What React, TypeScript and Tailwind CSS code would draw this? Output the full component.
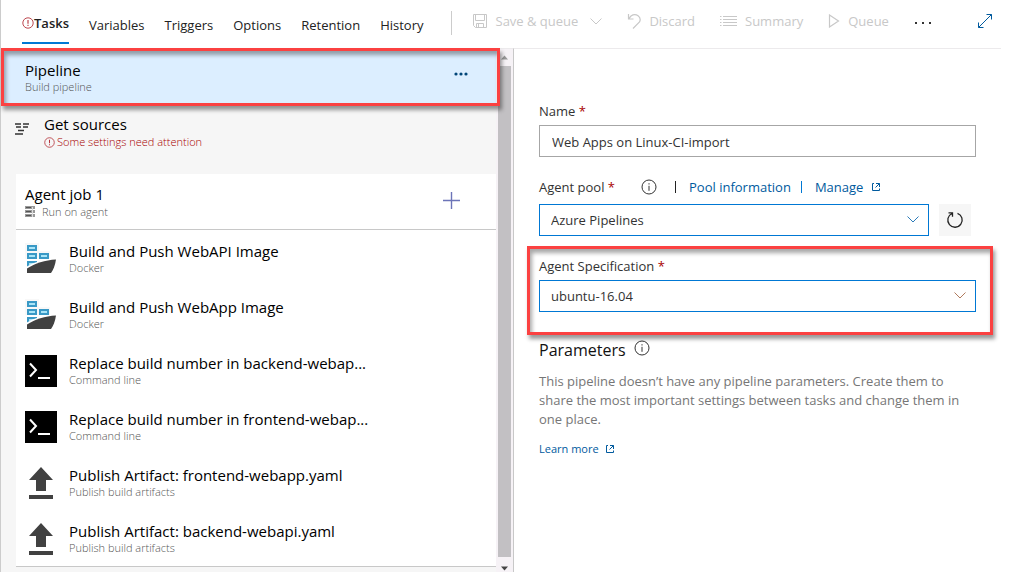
import React from "react";

type Task = { title: string; kind: string; icon: "docker" | "shell" | "upload" };

const tasks: Task[] = [
  { title: "Build and Push WebAPI Image", kind: "Docker", icon: "docker" },
  { title: "Build and Push WebApp Image", kind: "Docker", icon: "docker" },
  { title: "Replace build number in backend-webap...", kind: "Command line", icon: "shell" },
  { title: "Replace build number in frontend-webap...", kind: "Command line", icon: "shell" },
  { title: "Publish Artifact: frontend-webapp.yaml", kind: "Publish build artifacts", icon: "upload" },
  { title: "Publish Artifact: backend-webapi.yaml", kind: "Publish build artifacts", icon: "upload" },
];

function AlertIcon({ className }: { className: string }) {
  return (
    <svg viewBox="0 0 12 12" className={className} fill="none" stroke="#b5343c" aria-hidden="true">
      <circle cx="6" cy="6" r="5.2" strokeWidth="0.9" />
      <path d="M6 3v3.8M6 7.8v1.2" strokeWidth="1.1" />
    </svg>
  );
}

function InfoIcon() {
  return (
    <svg viewBox="0 0 16 16" className="size-4 shrink-0" fill="none" stroke="#333" aria-hidden="true">
      <circle cx="8" cy="8" r="7" strokeWidth="1" />
      <path d="M8 6.8v5M8 4.2v1.3" strokeWidth="1" />
    </svg>
  );
}

function ExternalIcon() {
  return (
    <svg viewBox="0 0 10 10" className="size-[10px]" fill="none" stroke="currentColor" aria-hidden="true">
      <path d="M3 1.5H1.5v7h7V6.5M5 1.5h3.5V5M8.5 1.5l-4 4" />
    </svg>
  );
}

function Chevron({ className }: { className: string }) {
  return (
    <svg viewBox="0 0 12 7" className={className} fill="none" stroke="currentColor" aria-hidden="true">
      <path d="M0.5 0.5 6 6l5.500-5.500" />
    </svg>
  );
}

function TaskIcon({ icon }: { icon: Task["icon"] }) {
  if (icon === "docker") {
    return (
      <svg viewBox="0 0 32 32" className="size-8 shrink-0" aria-hidden="true">
        <path d="M0 0h14v8h11v8H0z" fill="#f8f8f8" />
        <path d="M2 2h10v6H2zM2 10h10v6H2zM14 10h10v6H14zM2 18h10v6H2z" fill="#3999c6" />
        <path d="M4 4h6v2H4zM4 12h6v2H4zM16 12h6v2h-6zM4 20h6v2H4z" fill="#a9e4f7" />
        <path d="M2 23.500C10 19 20 15.500 32 15v16H2z" fill="#fff" />
        <path d="M2 25.500C10 20.500 20 17 31 16.500c-1 6-2.500 10-5 13.500H2z" fill="#414141" />
      </svg>
    );
  }
  if (icon === "shell") {
    return (
      <svg viewBox="0 0 32 32" className="size-8 shrink-0" aria-hidden="true">
        <path d="M0 0h32v32H0z" fill="#000" />
        <path d="m5 8.500 6 6.500-6 6.500M13 23h12" fill="none" stroke="#fff" strokeWidth="2" />
      </svg>
    );
  }
  return (
    <svg viewBox="0 0 32 32" className="size-8 shrink-0" fill="#414141" aria-hidden="true">
      <path d="M16 0 28 13h-7v11H11V13H4zM4 28h24v4H4z" />
    </svg>
  );
}

function Highlight({ className }: { className: string }) {
  return (
    <div
      className={`pointer-events-none absolute z-10 border-3 border-[#fb4141] shadow-[2px_4px_4px_rgba(0,0,0,0.4),inset_2px_4px_4px_rgba(0,0,0,0.35)] ${className}`}
    />
  );
}

function ToolButton({ label, children, after }: { label: string; children: React.ReactNode; after?: React.ReactNode }) {
  return (
    <button type="button" disabled className="flex items-center gap-2 whitespace-nowrap text-[#c8c8c8]">
      {children}
      <span>{label}</span>
      {after}
    </button>
  );
}

function Field({ label, id }: { label: string; id: string }) {
  return (
    <label htmlFor={id} className="block text-[13px] leading-5">
      {label} <span className="text-[#a80000]">*</span>
    </label>
  );
}

function Header() {
  return (
    <header className="flex h-12 items-start pl-[21px] text-[13px] leading-5 text-[#222]">
      <nav className="flex gap-5" aria-label="Pipeline editor">
        <a href="#tasks" className="flex h-[44px] items-center border-b-2 border-[#0078d4] pt-[3px] font-semibold">
          <AlertIcon className="size-[12px]" />
          Tasks
        </a>
        {["Variables", "Triggers", "Options", "Retention", "History"].map((t) => (
          <a key={t} href={`#${t}`} className="pt-[15px]">
            {t}
          </a>
        ))}
      </nav>
      <div className="mt-[11px] ml-[27px] h-6 w-px bg-[#ccc]" />
      <div className="ml-5 flex flex-1 items-center gap-[25px] pt-[11px]">
        <ToolButton label="Save & queue" after={<Chevron className="ml-1 h-[7px] w-3" />}>
          <svg viewBox="0 0 16 16" className="size-4" fill="none" stroke="#c8c8c8" aria-hidden="true">
            <path d="M1.500 1.500h13v13h-11l-2-2zM3.500 1.500v6h9v-6M4.500 14.500v-4h7v4M6.500 11v3" />
          </svg>
        </ToolButton>
        <ToolButton label="Discard">
          <svg viewBox="0 0 14 16" className="h-4 w-[14px]" fill="none" stroke="#c8c8c8" aria-hidden="true">
            <path d="M1.500 1v5h5M1.500 6l2.500-3c5-3.500 11 1 8.500 6L6 15.500" strokeWidth="1.2" />
          </svg>
        </ToolButton>
        <ToolButton label="Summary">
          <svg viewBox="0 0 17 12" className="h-3 w-[17px]" stroke="#c8c8c8" aria-hidden="true">
            <path d="M0 1.500h1.500M3 1.500h14M0 4.500h1.500M3 4.500h14M0 7.500h1.500M3 7.500h14M0 10.500h1.500M3 10.500h14" />
          </svg>
        </ToolButton>
        <ToolButton label="Queue">
          <svg viewBox="0 0 12 14" className="h-[14px] w-3" fill="none" stroke="#c8c8c8" aria-hidden="true">
            <path d="M1.500 1v12L10.500 7z" strokeWidth="1.2" />
          </svg>
        </ToolButton>
        <button type="button" aria-label="More actions" className="pt-1">
          <svg viewBox="0 0 18 4" className="h-1 w-[18px]" fill="#333" aria-hidden="true">
            <path d="M1 1h2v2H1zM8 1h2v2H8zM15 1h2v2h-2z" />
          </svg>
        </button>
      </div>
      <button type="button" aria-label="Full screen" className="mt-[13px] mr-[27px]">
        <svg viewBox="0 0 16 16" className="size-4" fill="none" stroke="#005a9e" aria-hidden="true">
          <path d="M9.500 1.500h5v5M14.500 1.500l-13 13M1.500 9.500v5h5" />
        </svg>
      </button>
    </header>
  );
}

function Sidebar() {
  return (
    <aside className="relative flex w-[513px] shrink-0 border-t border-r border-t-[#eceaec] border-r-[#c8c8c8] bg-[#f6f6f6]">
      <div className="min-w-0 flex-1">
        <div className="flex h-[57px] items-start justify-between bg-[#dceeff] pt-[11px] pr-7 pl-6">
          <div>
            <div className="text-[15px] leading-5 text-black">Pipeline</div>
            <div className="text-[11px] leading-[14px] font-light text-[#555]">Build pipeline</div>
          </div>
          <button type="button" aria-label="Pipeline actions" className="mt-3">
            <svg viewBox="0 0 14 4" className="h-1 w-[14px]" fill="#004578" aria-hidden="true">
              <circle cx="2" cy="2" r="1.600" />
              <circle cx="7" cy="2" r="1.600" />
              <circle cx="12" cy="2" r="1.600" />
            </svg>
          </button>
        </div>
        <div className="flex h-[68px] items-start gap-[14px] pt-2 pl-[14px]">
          <svg viewBox="0 0 15 14" className="mt-2 h-[14px] w-[15px]" stroke="#333" strokeWidth="1.300" aria-hidden="true">
            <path d="M0 2h6M8 2h6M1 5h5M8 5h5M3 8.500h6M0 12h8" />
          </svg>
          <div>
            <div className="text-[15px] leading-5 text-black">Get sources</div>
            <div className="flex items-center gap-[2px] text-[11px] leading-4 font-light text-[#a80000]">
              <AlertIcon className="size-[11px]" />
              Some settings need attention
            </div>
          </div>
        </div>
        <div className="ml-[15px] border-b border-[#c8c8c8] bg-white">
          <div className="flex h-14 items-start justify-between border-b border-[#c8c8c8] pt-[10px] pr-9 pl-[9px]">
            <div>
              <div className="text-[15px] leading-5 text-black">Agent job 1</div>
              <div className="flex items-center gap-[7px] text-[11px] leading-4 font-light text-[#555]">
                <svg viewBox="0 0 10 12" className="h-3 w-[10px]" aria-hidden="true">
                  <path d="M0 0h10v3H0zM0 4h10v3H0zM0 8h10v3H0z" fill="#999" />
                  <path d="M1 1.500h5M1 5.500h5M1 9.500h5" stroke="#555" />
                  <path d="M7.500 1v10" stroke="#ddd" />
                </svg>
                Run on agent
              </div>
            </div>
            <button type="button" aria-label="Add a task" className="mt-2">
              <svg viewBox="0 0 17 17" className="size-[17px]" fill="none" stroke="#6c74b8" strokeWidth="1.400" aria-hidden="true">
                <path d="M8.500 0v17M0 8.500h17" />
              </svg>
            </button>
          </div>
          <ul>
            {tasks.map((t) => (
              <li key={t.title} className="flex h-14 items-start gap-3 pt-[13px] pl-[9px]">
                <TaskIcon icon={t.icon} />
                <div className="-mt-[2px] min-w-0">
                  <div className="truncate text-[15px] leading-5 text-black">{t.title}</div>
                  <div className="text-[11px] leading-[14px] font-light text-[#555]">{t.kind}</div>
                </div>
              </li>
            ))}
          </ul>
        </div>
      </div>
      <div className="flex w-[17px] flex-col items-center bg-[#f6f2f6]" aria-hidden="true">
        <svg viewBox="0 0 17 17" className="size-[17px]" fill="#999">
          <path d="M5 10.500h7L8.500 6.500z" />
        </svg>
        <div className="w-[13px] flex-1 bg-[#c2c0c3]" />
        <svg viewBox="0 0 17 15" className="h-[15px] w-[17px]" fill="#444">
          <path d="M5 9.500h7l-3.500 4z" />
        </svg>
      </div>
      <Highlight className="-top-px left-0 h-[58px] w-[499px]" />
    </aside>
  );
}

function Details() {
  return (
    <main className="mr-[19px] min-w-0 flex-1 border-t border-[#eceaec] px-[25px] pt-[52px] pb-6 text-[13px] text-[#333]">
      <Field label="Name" id="name" />
      <input
        id="name"
        defaultValue="Web Apps on Linux-CI-import"
        className="mt-1 h-8 w-full border border-[#a6a6a6] px-3 pt-[2px] outline-none"
      />
      <div className="mt-5 flex items-center leading-5">
        <Field label="Agent pool" id="pool" />
        <span className="ml-[26px]">
          <InfoIcon />
        </span>
        <span className="ml-[18px] h-3 w-px bg-[#222]" />
        <a href="#pool-information" className="ml-[13px] whitespace-nowrap text-[#005a9e]">
          Pool information
        </a>
        <span className="ml-[10px] h-3 w-px bg-[#0078d4]" />
        <a href="#manage" className="ml-[13px] flex items-center gap-2 text-[#005a9e]">
          Manage
          <ExternalIcon />
        </a>
      </div>
      <div className="mt-[7px] flex gap-[10px] pr-[5px]">
        <div className="relative flex-1">
          <select
            id="pool"
            className="h-8 w-full appearance-none border border-[#0078d4] bg-white px-[11px] pt-[2px] outline-none"
          >
            <option>Azure Pipelines</option>
          </select>
          <Chevron className="pointer-events-none absolute top-3 right-[10px] h-[7px] w-3 text-[#2b7bb9]" />
        </div>
        <button type="button" aria-label="Refresh" className="flex size-8 items-center justify-center bg-[#f6f6f6]">
          <svg viewBox="0 0 18 18" className="size-[18px]" fill="none" stroke="#222" strokeWidth="1.300" aria-hidden="true">
            <path d="M11.500 2.300A7.200 7.200 0 1 1 6 2.500M2.500 1.800h4v4" />
          </svg>
        </button>
      </div>
      <section className="relative mt-5">
        <Field label="Agent Specification" id="spec" />
        <div className="relative mt-1">
          <select
            id="spec"
            className="h-8 w-full appearance-none border border-[#0078d4] bg-white px-[11px] pt-[2px] outline-none"
          >
            <option>ubuntu-16.04</option>
          </select>
          <Chevron className="pointer-events-none absolute top-3 right-[10px] h-[7px] w-3 text-[#b07a5c]" />
        </div>
        <Highlight className="-top-[10px] -right-[17px] -bottom-[23px] -left-3" />
      </section>
      <h2 className="mt-[26px] flex items-center gap-2 text-[16px] leading-6 text-[#111]">
        Parameters
        <span className="mb-1">
          <InfoIcon />
        </span>
      </h2>
      <p className="mt-[10px] leading-[19px] text-[#767676]">
        This pipeline doesn’t have any pipeline parameters. Create them to share the most important settings between tasks
        and change them in one place.
      </p>
      <a href="#learn-more" className="mt-[10px] inline-flex items-center gap-[6px] text-[11px] leading-5 text-[#005a9e]">
        Learn more
        <ExternalIcon />
      </a>
    </main>
  );
}

export default function App() {
  return (
    <div className="flex min-h-screen flex-col border-l border-[#ccc] bg-white font-['Open_Sans','Noto_Sans',sans-serif]">
      <Header />
      <div className="flex flex-1">
        <Sidebar />
        <Details />
      </div>
    </div>
  );
}
